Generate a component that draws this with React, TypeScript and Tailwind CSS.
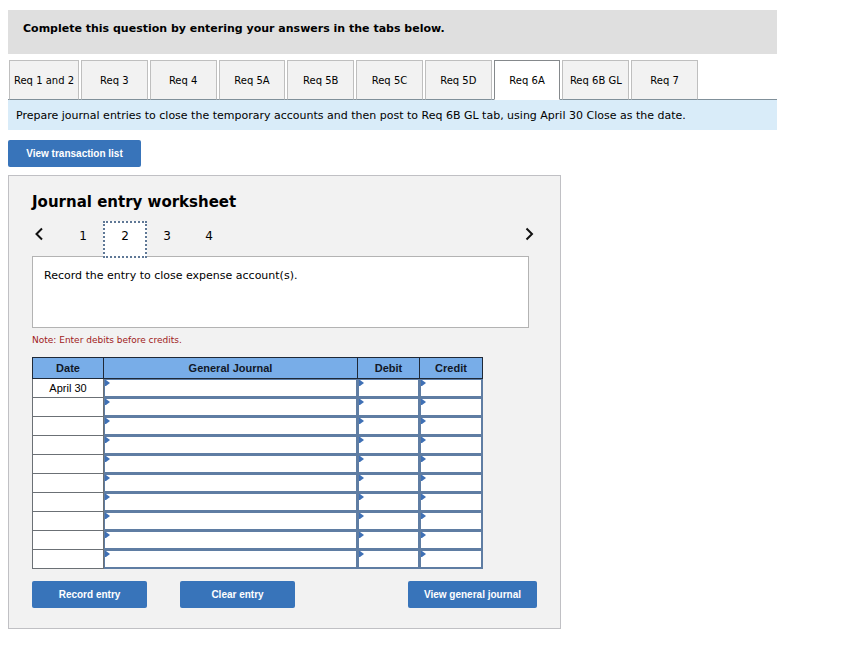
import { useState } from "react";

const tabs = [
  "Req 1 and 2",
  "Req 3",
  "Req 4",
  "Req 5A",
  "Req 5B",
  "Req 5C",
  "Req 5D",
  "Req 6A",
  "Req 6B GL",
  "Req 7",
];

const pages = ["1", "2", "3", "4"];

const rows = ["April 30", "", "", "", "", "", "", "", "", ""];

const buttonStyle =
  "h-[27px] rounded-[2px] bg-[#3874ba] text-center font-['Liberation_Sans',Arial,sans-serif] text-[10px] font-bold text-white hover:bg-[#2f64a3]";

const EntryCell = ({ label }: { label: string }) => (
  <td className="relative border border-[#5f7da3] p-0">
    <input
      type="text"
      aria-label={label}
      className="block h-[18px] w-full border border-[#5f7da3] bg-white px-2 text-[11px] outline-none"
    />
    <svg
      className="pointer-events-none absolute top-px left-px"
      width="5"
      height="6"
      viewBox="0 0 5 6"
      aria-hidden="true"
    >
      <path d="M0 0H1L5 3L1 6H0Z" fill="#3f70b5" />
    </svg>
  </td>
);

const JournalTable = () => (
  <table className="mt-[9px] w-full max-w-[451px] table-fixed border-collapse bg-white font-['Liberation_Sans',Arial,sans-serif] text-[11px]">
    <colgroup>
      <col className="w-[71px]" />
      <col />
      <col className="w-[62px]" />
      <col className="w-[63px]" />
    </colgroup>
    <thead>
      <tr className="h-[21px] bg-[#78ade8] text-[#111827]">
        <th className="border border-[#1f2937] p-0">Date</th>
        <th className="border border-[#1f2937] p-0">General Journal</th>
        <th className="border border-[#1f2937] p-0">Debit</th>
        <th className="border border-[#1f2937] p-0">Credit</th>
      </tr>
    </thead>
    <tbody>
      {rows.map((date, i) => (
        <tr key={i} className="h-[19px]">
          <td className="border border-[#6b7075] p-0 text-center leading-4">{date}</td>
          <EntryCell label={`General journal, line ${i + 1}`} />
          <EntryCell label={`Debit, line ${i + 1}`} />
          <EntryCell label={`Credit, line ${i + 1}`} />
        </tr>
      ))}
    </tbody>
  </table>
);

const Worksheet = () => {
  const [page, setPage] = useState("2");

  return (
    <section className="mt-2 max-w-[553px] border border-[#c0c0c4] bg-[#f2f2f2] px-[23px] pt-4 pb-5">
      <h2 className="text-[15px] leading-5 font-bold">Journal entry worksheet</h2>

      <div className="mt-[9px] flex items-start justify-between">
        <div className="flex items-start">
          <button type="button" aria-label="Previous" className="mt-[5px] mr-[14px] w-4">
            <svg width="14" height="16" viewBox="0 0 14 16" aria-hidden="true">
              <path d="M10 2.5L4.5 8L10 13.5" fill="none" stroke="#111" strokeWidth="2" />
            </svg>
          </button>
          {pages.map((p) => (
            <button
              key={p}
              type="button"
              onClick={() => setPage(p)}
              className={`h-[37px] pb-2 text-[12px] ${
                p === page
                  ? "relative z-10 -mx-px w-11 border-2 border-dotted border-[#5f7896] bg-white"
                  : "w-[42px]"
              }`}
            >
              {p}
            </button>
          ))}
        </div>
        <button type="button" aria-label="Next" className="mt-[5px]">
          <svg width="14" height="16" viewBox="0 0 14 16" aria-hidden="true">
            <path d="M3.5 2.5L9 8L3.5 13.5" fill="none" stroke="#111" strokeWidth="2" />
          </svg>
        </button>
      </div>

      <div className="-mt-0.5 mr-2 h-[72px] border border-[#b3b3b3] bg-white px-[11px] py-[11px] text-[11px] leading-4">
        Record the entry to close expense account(s).
      </div>

      <p className="mt-1 text-[9px] leading-4 text-[#a02020]">
        Note: Enter debits before credits.
      </p>

      <JournalTable />

      <div className="mt-3 flex items-center">
        <button type="button" className={`${buttonStyle} w-[115px]`}>
          Record entry
        </button>
        <button type="button" className={`${buttonStyle} ml-[33px] w-[115px]`}>
          Clear entry
        </button>
        <button type="button" className={`${buttonStyle} ml-auto w-[129px]`}>
          View general journal
        </button>
      </div>
    </section>
  );
};

const App = () => {
  const [tab, setTab] = useState("Req 6A");

  return (
    <main className="bg-white px-2 py-2.5 font-['DejaVu_Sans',Verdana,sans-serif] text-black">
      <div className="max-w-[769px]">
        <h1 className="h-11 bg-[#dfdfdf] px-[15px] pt-[11px] text-[11px] leading-4 font-bold">
          Complete this question by entering your answers in the tabs below.
        </h1>

        <div className="mt-1.5 border-b border-[#80909a] pl-px">
          <div className="-mb-px grid max-w-[689px] grid-cols-[70px_repeat(9,minmax(0,1fr))] gap-0.5">
            {tabs.map((name) => (
              <button
                key={name}
                type="button"
                onClick={() => setTab(name)}
                className={`h-10 border text-[10px] whitespace-nowrap ${
                  name === tab
                    ? "border-[#85898c] border-b-white bg-white"
                    : "border-[#bfbfbf] border-b-[#80909a] bg-[#f2f2f2]"
                }`}
              >
                {name}
              </button>
            ))}
          </div>
        </div>

        <p className="bg-[#d9ecf9] px-2 pt-2 pb-1.5 text-[11px] leading-4">
          Prepare journal entries to close the temporary accounts and then post to Req 6B GL tab,
          using April 30 Close as the date.
        </p>
      </div>

      <button type="button" className={`${buttonStyle} mt-2.5 block w-[133px]`}>
        View transaction list
      </button>

      <Worksheet />
    </main>
  );
};

export default App;
